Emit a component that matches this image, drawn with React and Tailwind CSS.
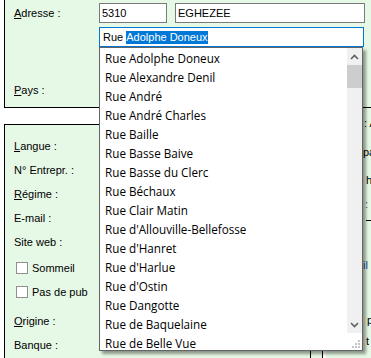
import React from 'react';

const streets = [
  'Rue Adolphe Doneux',
  'Rue Alexandre Denil',
  'Rue André',
  'Rue André Charles',
  'Rue Baille',
  'Rue Basse Baive',
  'Rue Basse du Clerc',
  'Rue Béchaux',
  'Rue Clair Matin',
  "Rue d'Allouville-Bellefosse",
  "Rue d'Hanret",
  "Rue d'Harlue",
  "Rue d'Ostin",
  'Rue Dangotte',
  'Rue de Baquelaine',
  'Rue de Belle Vue',
];

// libellé avec la lettre d'accès soulignée
const Label = ({ k, rest }) => (
  <span>
    {k && <span className="underline underline-offset-[1px]">{k}</span>}
    {rest}
  </span>
);

const Row = ({ children, className = '' }) => (
  <div className={`flex h-[24px] items-center ${className}`}>{children}</div>
);

const Check = ({ label }) => (
  <div className="flex items-center">
    <span className="ml-[2px] mr-[4px] h-[12px] w-[12px] border border-[#8f8f8f] bg-white" />
    <span>{label}</span>
  </div>
);

const Chevron = ({ up }) => (
  <svg width="9" height="6" viewBox="0 0 9 6">
    <polyline
      points={up ? '1,5 4.5,1.5 8,5' : '1,1 4.5,4.5 8,1'}
      fill="none"
      stroke="#606060"
      strokeWidth="1.6"
    />
  </svg>
);

const Grip = () => (
  <svg width="9" height="9" viewBox="0 0 9 9">
    {[
      [6, 0], [3, 3], [6, 3], [0, 6], [3, 6], [6, 6],
    ].map(([x, y]) => (
      <rect key={`${x}-${y}`} x={x} y={y} width="2" height="2" fill="#c4c4c4" />
    ))}
  </svg>
);

const App = () => {
  return (
    <div className="relative h-[358px] w-[371px] overflow-hidden bg-white font-['Liberation_Sans',Arial,sans-serif] text-[11px] leading-[14px] text-black">
      {/* cadre adresse */}
      <div className="ml-[4px] mt-[-10px] h-[118px] w-[400px] border border-black bg-[#e6f9e6] pl-[9px] pt-[12px]">
        <div className="flex h-[20px] items-center">
          <div className="w-[85px] shrink-0">
            <Label k="A" rest="dresse :" />
          </div>
          <div className="h-[20px] w-[68px] shrink-0 border border-[#7a7a7a] bg-white pl-[2px] leading-[18px]">5310</div>
          <div className="ml-[8px] h-[20px] w-[190px] shrink-0 border border-[#7a7a7a] bg-white pl-[2px] leading-[18px]">EGHEZEE</div>
        </div>
        <div className="ml-[85px] mt-[4px] flex h-[20px] w-[265px] items-center whitespace-pre border border-[#0078d7] bg-white pl-[3px]">
          <span>{'Rue\u00a0'}</span>
          <span className="bg-[#0078d7] leading-[13px] text-white">Adolphe Doneux</span>
        </div>
        <div className="mt-[36px]">
          <Label k="P" rest="ays :" />
        </div>
      </div>

      <div className="flex items-start">
        {/* cadre infos */}
        <div className="ml-[4px] mt-[16px] h-[260px] w-[319px] shrink-0 border border-black bg-[#e6f9e6] pl-[9px] pt-[9px]">
          <Row><Label k="L" rest="angue :" /></Row>
          <Row>N° Entrepr. :</Row>
          <Row><Label k="R" rest="égime :" /></Row>
          <Row>E-mail :</Row>
          <Row>Site web :</Row>
          <Row className="mt-[2px]"><Check label="Sommeil" /></Row>
          <Row><Check label="Pas de pub" /></Row>
          <Row className="mt-[5px]"><Label k="O" rest="rigine :" /></Row>
          <div className="flex h-[40px]">
            <div className="flex h-[24px] w-[85px] shrink-0 items-center">Banque :</div>
            <div className="h-[40px] w-[212px] shrink-0 border-r border-black" />
          </div>
        </div>

        {/* panneau de droite */}
        <div className="ml-[3px] h-[260px] w-[100px] shrink-0 whitespace-nowrap bg-[#e6f9e6]">
          <div className="mt-[8px] h-[14px] pl-[38px]">: Actif</div>
          <div className="mt-[15px] h-[14px] pl-[37px]">pas</div>
          <div className="mt-[14px] h-[14px] pl-[40px]">h</div>
          <div className="mt-[10px] h-[14px] pl-[39px] text-[#2a55a0]">:</div>
          <div className="ml-[40px] mt-[9px] border-t border-black" />
          <div className="mt-[37px] h-[14px] pl-[37px] text-[#1c4fa0]">il</div>
          <div className="mt-[41px] h-[14px] pl-[41px]">p</div>
          <div className="mt-[7px] h-[14px] pl-[40px]">t</div>
        </div>
      </div>

      {/* liste d'autocomplétion */}
      <div className="absolute left-[99px] top-[47px] flex h-[304px] w-[264px] border border-[#646464] bg-white shadow-[3px_3px_3px_rgba(0,0,0,0.4)]">
        <div className="flex-1 overflow-hidden font-['Segoe_UI','Open_Sans',sans-serif] text-[11.7px]">
          {streets.map((s) => (
            <div key={s} className="flex h-[19px] items-center pl-[5px]">
              {s}
            </div>
          ))}
        </div>
        <div className="flex w-[15px] flex-col">
          <div className="flex h-[285px] flex-col bg-[#f0f0f0]">
            <div className="flex h-[17px] items-center justify-center">
              <Chevron up />
            </div>
            <div className="h-[23px] bg-[#cdcdcd]" />
            <div className="flex-1" />
            <div className="flex h-[17px] items-center justify-center">
              <Chevron />
            </div>
          </div>
          <div className="flex flex-1 items-end justify-end pb-[1px] pr-[1px]">
            <Grip />
          </div>
        </div>
      </div>
    </div>
  );
};

export default App;
